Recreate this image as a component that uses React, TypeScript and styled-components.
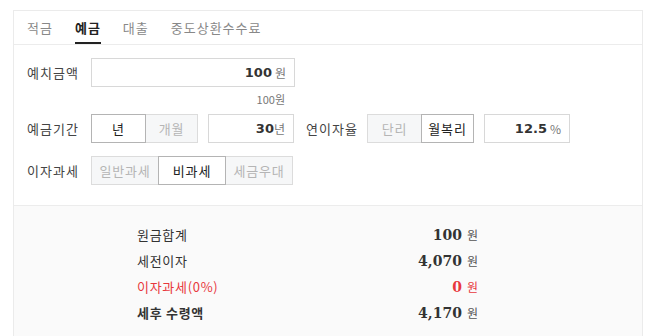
import React from "react";
import styled, { createGlobalStyle } from "styled-components";

const Global = createGlobalStyle`
  html, body { margin: 0; padding: 0; background: #fff; }
  body { font-family: "Noto Sans CJK KR", "Noto Sans", sans-serif; color: #333; }
`;

const Frame = styled.div`
  margin: 10px 12px 0 13px;
  border: 1px solid #ebebeb;
  border-bottom: none;
  height: 330px;
  box-sizing: border-box;
  display: flex;
  flex-direction: column;
`;

const Tabs = styled.div`
  display: flex;
  gap: 22px;
  padding: 0 13px;
  height: 33px;
  border-bottom: 1px solid #ececec;
`;

const Tab = styled.div<{ $active?: boolean }>`
  font-size: 13px;
  letter-spacing: 1px;
  line-height: 33px;
  height: 33px;
  box-sizing: border-box;
  color: ${(p) => (p.$active ? "#222" : "#888")};
  font-weight: ${(p) => (p.$active ? 700 : 400)};
  border-bottom: 2px solid ${(p) => (p.$active ? "#222" : "transparent")};
  margin-bottom: -1px;
`;

const Form = styled.div`
  padding: 13px 13px 20px 13px;
  display: flex;
  flex-direction: column;
  border-bottom: 1px solid #ececec;
`;

const Row = styled.div<{ $mt?: number }>`
  display: flex;
  align-items: center;
  height: 29px;
  margin-top: ${(p) => p.$mt ?? 0}px;
`;

const Label = styled.div<{ $w?: number; $ml?: number }>`
  width: ${(p) => p.$w ?? 64}px;
  margin-left: ${(p) => p.$ml ?? 0}px;
  font-size: 13px;
  letter-spacing: 1px;
  color: #444;
  flex-shrink: 0;
`;

const InputBox = styled.div<{ $w: number; $ml?: number }>`
  width: ${(p) => p.$w}px;
  height: 29px;
  margin-left: ${(p) => p.$ml ?? 0}px;
  box-sizing: border-box;
  border: 1px solid #d8d8d8;
  background: #fff;
  display: flex;
  align-items: center;
  justify-content: flex-end;
  padding-right: 8px;
  gap: 3px;
`;

const Value = styled.span`
  font-family: "DejaVu Sans", "Liberation Sans", sans-serif;
  font-weight: 700;
  font-size: 13px;
  color: #333;
`;

const Unit = styled.span<{ $tight?: boolean }>`
  font-size: 12px;
  color: #777;
  margin-left: ${(p) => (p.$tight ? -3 : 0)}px;
`;

const Sub = styled.div`
  width: 258px;
  text-align: right;
  font-size: 11px;
  color: #777;
  line-height: 14px;
  margin-top: 5px;
`;

const Group = styled.div<{ $ml?: number }>`
  display: flex;
  margin-left: ${(p) => p.$ml ?? 0}px;
`;

const Seg = styled.div<{ $w: number; $on?: boolean }>`
  width: ${(p) => p.$w}px;
  height: 29px;
  box-sizing: border-box;
  display: flex;
  align-items: center;
  justify-content: center;
  font-size: 13px;
  letter-spacing: 0.8px;
  background: ${(p) => (p.$on ? "#fff" : "#f6f7f8")};
  color: ${(p) => (p.$on ? "#222" : "#b5b5b5")};
  border: 1px solid ${(p) => (p.$on ? "#b4b4b4" : "#dcdcdc")};
  & + & { margin-left: -1px; }
  position: relative;
  z-index: ${(p) => (p.$on ? 1 : 0)};
`;

const Result = styled.div`
  flex: 1;
  background: #fafafa;
  padding: 15px 0 0 123px;
`;

const ResultGrid = styled.div`
  width: 341px;
  display: flex;
  flex-direction: column;
`;

const RRow = styled.div<{ $red?: boolean }>`
  display: flex;
  justify-content: space-between;
  align-items: center;
  height: 26px;
  color: ${(p) => (p.$red ? "#e8383d" : "#333")};
`;

const RLabel = styled.span<{ $bold?: boolean }>`
  font-size: 13px;
  letter-spacing: 0.7px;
  font-weight: ${(p) => (p.$bold ? 700 : 400)};
`;

const RVal = styled.span`
  display: flex;
  align-items: baseline;
  gap: 5px;
`;

const Num = styled.span`
  font-family: "DejaVu Serif", "Liberation Serif", serif;
  font-weight: 700;
  font-size: 14px;
`;

const Won = styled.span<{ $red?: boolean }>`
  font-size: 12px;
  color: ${(p) => (p.$red ? "#e8383d" : "#555")};
`;

const results = [
  { label: "원금합계", value: "100" },
  { label: "세전이자", value: "4,070" },
  { label: "이자과세(0%)", value: "0", red: true },
  { label: "세후 수령액", value: "4,170", bold: true },
];

export default function App() {
  return (
    <>
      <Global />
      <Frame>
        <Tabs>
          <Tab>적금</Tab>
          <Tab $active>예금</Tab>
          <Tab>대출</Tab>
          <Tab>중도상환수수료</Tab>
        </Tabs>
        <Form>
          <Row>
            <Label>예치금액</Label>
            <InputBox $w={204}>
              <Value>100</Value>
              <Unit>원</Unit>
            </InputBox>
          </Row>
          <Sub>100원</Sub>
          <Row $mt={8}>
            <Label>예금기간</Label>
            <Group>
              <Seg $w={55} $on>년</Seg>
              <Seg $w={53}>개월</Seg>
            </Group>
            <InputBox $w={86} $ml={10}>
              <Value>30</Value>
              <Unit $tight>년</Unit>
            </InputBox>
            <Label $w={61} $ml={12}>연이자율</Label>
            <Group>
              <Seg $w={55}>단리</Seg>
              <Seg $w={53} $on>월복리</Seg>
            </Group>
            <InputBox $w={86} $ml={10}>
              <Value>12.5</Value>
              <Unit>%</Unit>
            </InputBox>
          </Row>
          <Row $mt={13}>
            <Label>이자과세</Label>
            <Group>
              <Seg $w={68}>일반과세</Seg>
              <Seg $w={68} $on>비과세</Seg>
              <Seg $w={68}>세금우대</Seg>
            </Group>
          </Row>
        </Form>
        <Result>
          <ResultGrid>
            {results.map((r) => (
              <RRow key={r.label} $red={r.red}>
                <RLabel $bold={r.bold}>{r.label}</RLabel>
                <RVal>
                  <Num>{r.value}</Num>
                  <Won $red={r.red}>원</Won>
                </RVal>
              </RRow>
            ))}
          </ResultGrid>
        </Result>
      </Frame>
    </>
  );
}
